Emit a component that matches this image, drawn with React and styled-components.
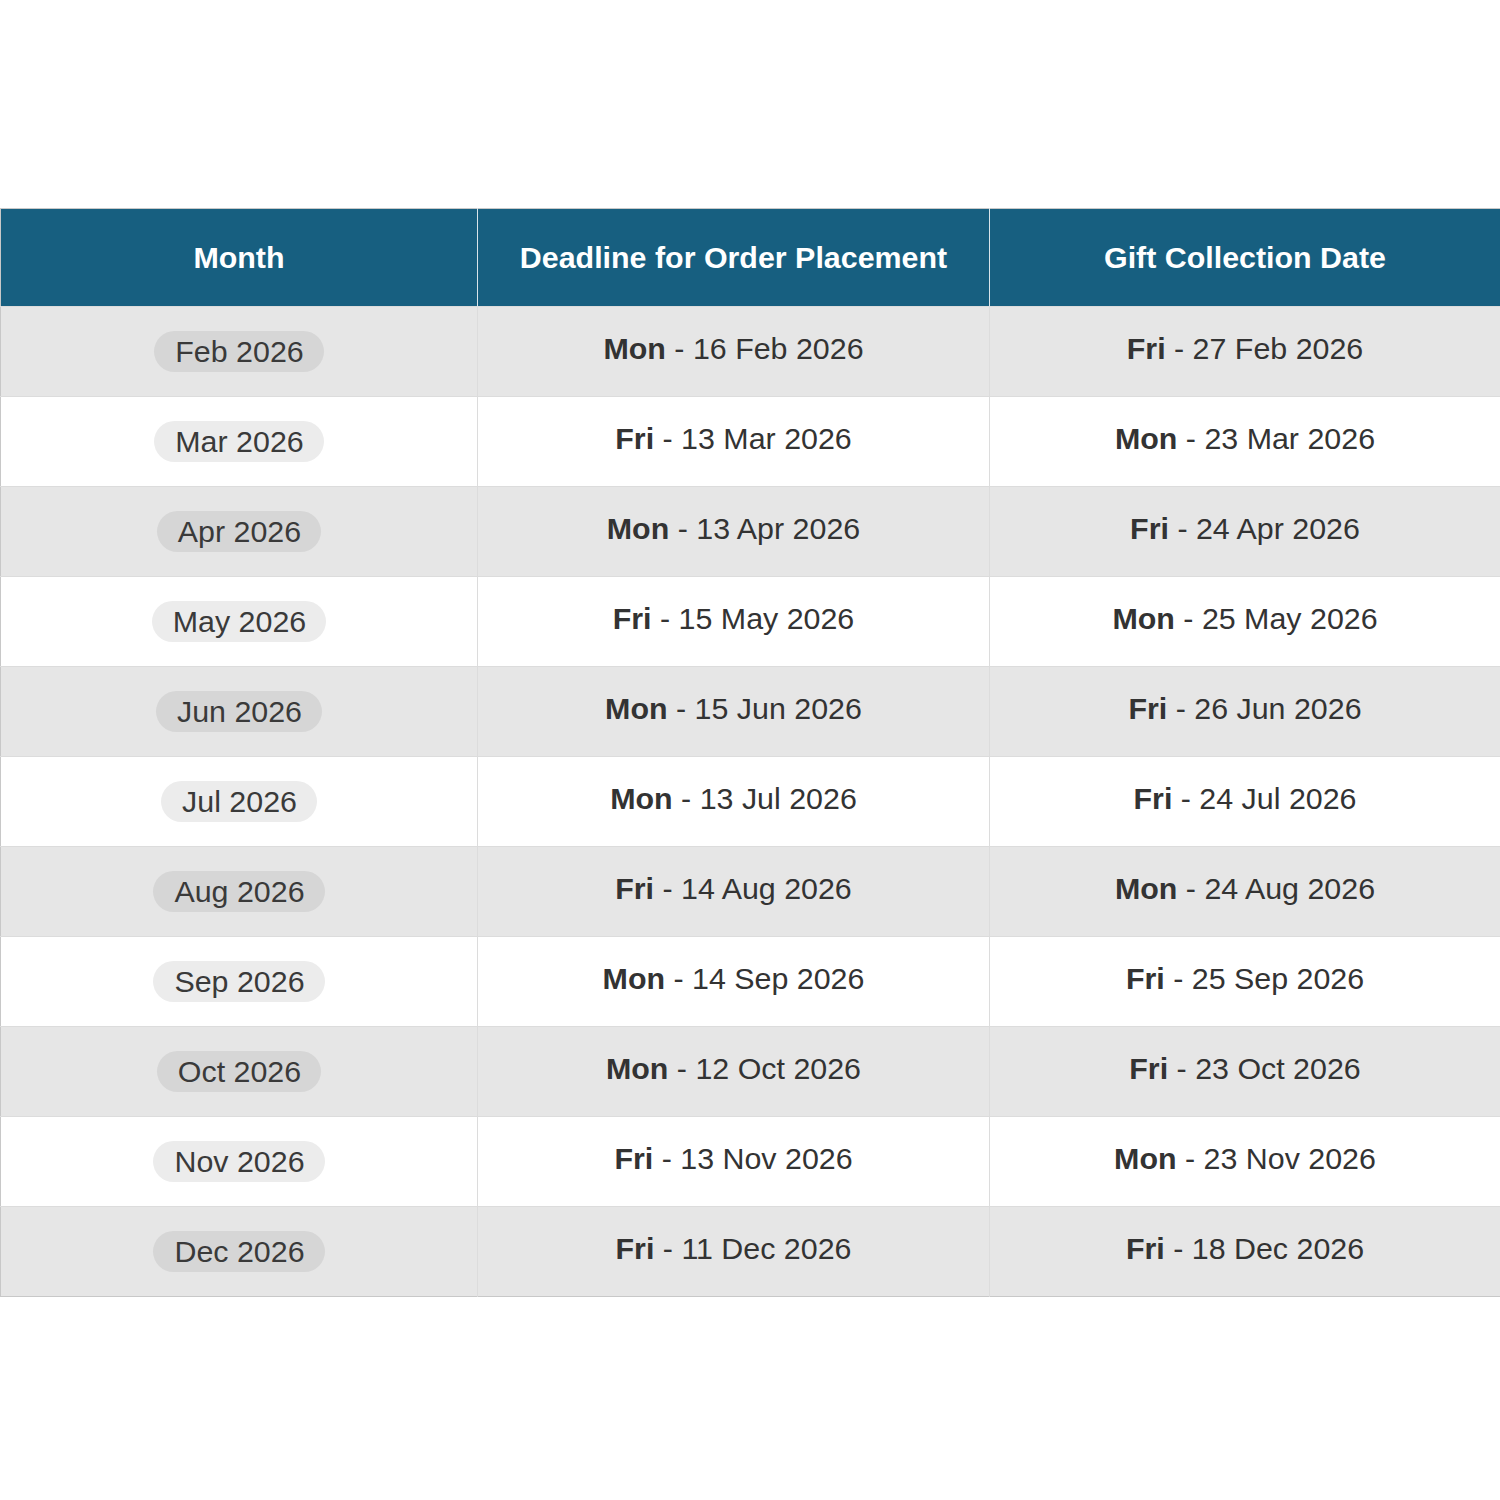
import React from "react";
import styled, { createGlobalStyle } from "styled-components";

const Global = createGlobalStyle`
  html, body { margin: 0; padding: 0; background: #fff; }
  body { font-family: "Liberation Sans", Arial, sans-serif; }
`;

const Page = styled.div`
  width: 1500px;
  height: 1500px;
  padding-top: 208px;
  box-sizing: border-box;
`;

const Table = styled.table`
  width: 1500px;
  border-collapse: collapse;
  table-layout: fixed;
  border: 1px solid #c8c8c8;
`;

const Th = styled.th`
  background: #175f80;
  color: #fff;
  font-size: 30.4px;
  font-weight: 700;
  height: 97px;
  padding: 0;
  text-align: center;
  border-left: 1px solid #d9e4ea;
  &:first-child { border-left: none; }
`;

const Tr = styled.tr`
  background: ${(p) => (p.$alt ? "#e6e6e6" : "#ffffff")};
  border-top: 1px solid #dcdcdc;
`;

const Td = styled.td`
  height: 83px;
  padding: 0 0 6px;
  text-align: center;
  font-size: 30.4px;
  color: #333;
  border-left: 1px solid #dcdcdc;
  &:first-child { border-left: none; padding: 0; height: 89px; }
`;

const Pill = styled.span`
  display: inline-block;
  padding: 4px 20px 4px 21px;
  border-radius: 21px;
  background: ${(p) => (p.$alt ? "#d6d6d6" : "#ececec")};
  color: #3a3a3a;
  font-size: 30.4px;
  line-height: 33px;
`;

const Day = styled.b`
  font-weight: 700;
`;

const rows = [
  ["Feb 2026", "Mon", "16 Feb 2026", "Fri", "27 Feb 2026"],
  ["Mar 2026", "Fri", "13 Mar 2026", "Mon", "23 Mar 2026"],
  ["Apr 2026", "Mon", "13 Apr 2026", "Fri", "24 Apr 2026"],
  ["May 2026", "Fri", "15 May 2026", "Mon", "25 May 2026"],
  ["Jun 2026", "Mon", "15 Jun 2026", "Fri", "26 Jun 2026"],
  ["Jul 2026", "Mon", "13 Jul 2026", "Fri", "24 Jul 2026"],
  ["Aug 2026", "Fri", "14 Aug 2026", "Mon", "24 Aug 2026"],
  ["Sep 2026", "Mon", "14 Sep 2026", "Fri", "25 Sep 2026"],
  ["Oct 2026", "Mon", "12 Oct 2026", "Fri", "23 Oct 2026"],
  ["Nov 2026", "Fri", "13 Nov 2026", "Mon", "23 Nov 2026"],
  ["Dec 2026", "Fri", "11 Dec 2026", "Fri", "18 Dec 2026"],
];

export default function App() {
  return (
    <>
      <Global />
      <Page>
        <Table>
          <colgroup>
            <col style={{ width: 477 }} />
            <col style={{ width: 512 }} />
            <col style={{ width: 511 }} />
          </colgroup>
          <thead>
            <tr>
              <Th>Month</Th>
              <Th>Deadline for Order Placement</Th>
              <Th>Gift Collection Date</Th>
            </tr>
          </thead>
          <tbody>
            {rows.map((r, i) => (
              <Tr key={r[0]} $alt={i % 2 === 0}>
                <Td>
                  <Pill $alt={i % 2 === 0}>{r[0]}</Pill>
                </Td>
                <Td>
                  <Day>{r[1]}</Day> - {r[2]}
                </Td>
                <Td>
                  <Day>{r[3]}</Day> - {r[4]}
                </Td>
              </Tr>
            ))}
          </tbody>
        </Table>
      </Page>
    </>
  );
}
